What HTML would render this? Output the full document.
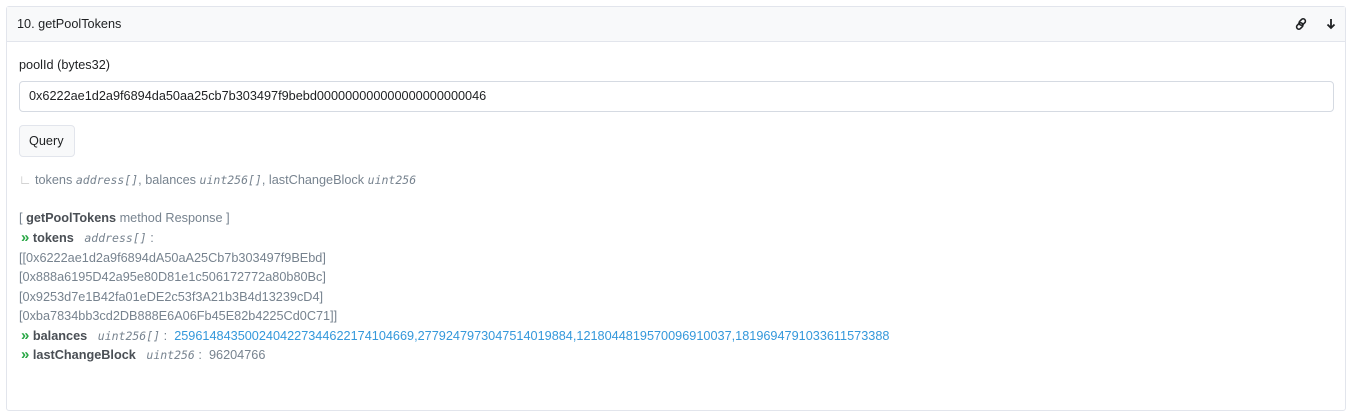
<!DOCTYPE html>
<html><head><style>
body{margin:0;background:#fff;font-family:"Liberation Sans",Arial,sans-serif;font-size:12.7px;color:#1e2022;}
.card{position:absolute;left:6px;top:6px;width:1338px;height:403px;border:1px solid #e2e5ec;border-radius:3px;background:#fff;}
.hd{height:34px;background:#f8f9fa;border-bottom:1px solid #e2e5ec;position:relative;}
.hd span{position:absolute;left:10px;top:10px;}
.t{position:absolute;white-space:nowrap;}
.input{position:absolute;left:12px;top:74px;width:1313px;height:29px;border:1px solid #d5dae2;border-radius:4px;}
.btn{position:absolute;left:12px;top:118px;width:54px;height:30px;border:1px solid #e2e5ec;border-radius:4px;background:#f8f9fa;}
.g{color:#77838f}
.m{font-family:"DejaVu Sans Mono",monospace;font-style:italic;font-size:11.5px;color:#77838f}
.b{font-weight:bold;color:#4a4f55}
.ch{color:#28a745;font-weight:bold;font-size:15px;}
.bl{color:#3498db}
</style></head><body>
<div class="card">
<div class="hd"><span>10. getPoolTokens</span>
<svg style="position:absolute;left:1288px;top:11px" width="12" height="12" viewBox="0 0 12 12"><g fill="none" stroke="#1e2022" stroke-width="1.6"><rect x="5" y="0.5" width="4.5" height="7" rx="2.2" transform="rotate(45 7.25 4)"/><rect x="2.5" y="4.5" width="4.5" height="7" rx="2.2" transform="rotate(45 4.75 8)"/></g></svg>
<svg style="position:absolute;left:1319px;top:11px" width="10" height="12" viewBox="0 0 10 12"><path d="M5 1V10M1.5 6.5L5 10L8.5 6.5" fill="none" stroke="#1e2022" stroke-width="1.8"/></svg>
</div>
<div class="t" style="left:12px;top:51px">poolId (bytes32)</div>
<div class="input"><div class="t" style="left:9px;top:7px">0x6222ae1d2a9f6894da50aa25cb7b303497f9bebd000000000000000000000046</div></div>
<div class="btn"><div class="t" style="left:9px;top:8px">Query</div></div>
<div class="t g" style="left:12px;top:166px"><span style="color:#bbb">∟</span> tokens <span class="m">address[]</span>, balances <span class="m">uint256[]</span>, lastChangeBlock <span class="m">uint256</span></div>
<div class="t g" style="left:12px;top:204px">[ <span class="b">getPoolTokens</span> method Response ]</div>
<div class="t g" style="left:14px;top:222px"><span class="ch">»</span> <span class="b">tokens</span> &nbsp; <span class="m">address[]</span> :</div>
<div class="t g" style="left:12px;top:244px">[[0x6222ae1d2a9f6894dA50aA25Cb7b303497f9BEbd]</div>
<div class="t g" style="left:12px;top:263px">[0x888a6195D42a95e80D81e1c506172772a80b80Bc]</div>
<div class="t g" style="left:12px;top:283px">[0x9253d7e1B42fa01eDE2c53f3A21b3B4d13239cD4]</div>
<div class="t g" style="left:12px;top:302px">[0xba7834bb3cd2DB888E6A06Fb45E82b4225Cd0C71]]</div>
<div class="t g" style="left:14px;top:320px"><span class="ch">»</span> <span class="b">balances</span> &nbsp; <span class="m">uint256[]</span> : &nbsp;<span class="bl">2596148435002404227344622174104669,2779247973047514019884,1218044819570096910037,1819694791033611573388</span></div>
<div class="t g" style="left:14px;top:339px"><span class="ch">»</span> <span class="b">lastChangeBlock</span> &nbsp; <span class="m">uint256</span> : &nbsp;96204766</div>
</div>
</body></html>
